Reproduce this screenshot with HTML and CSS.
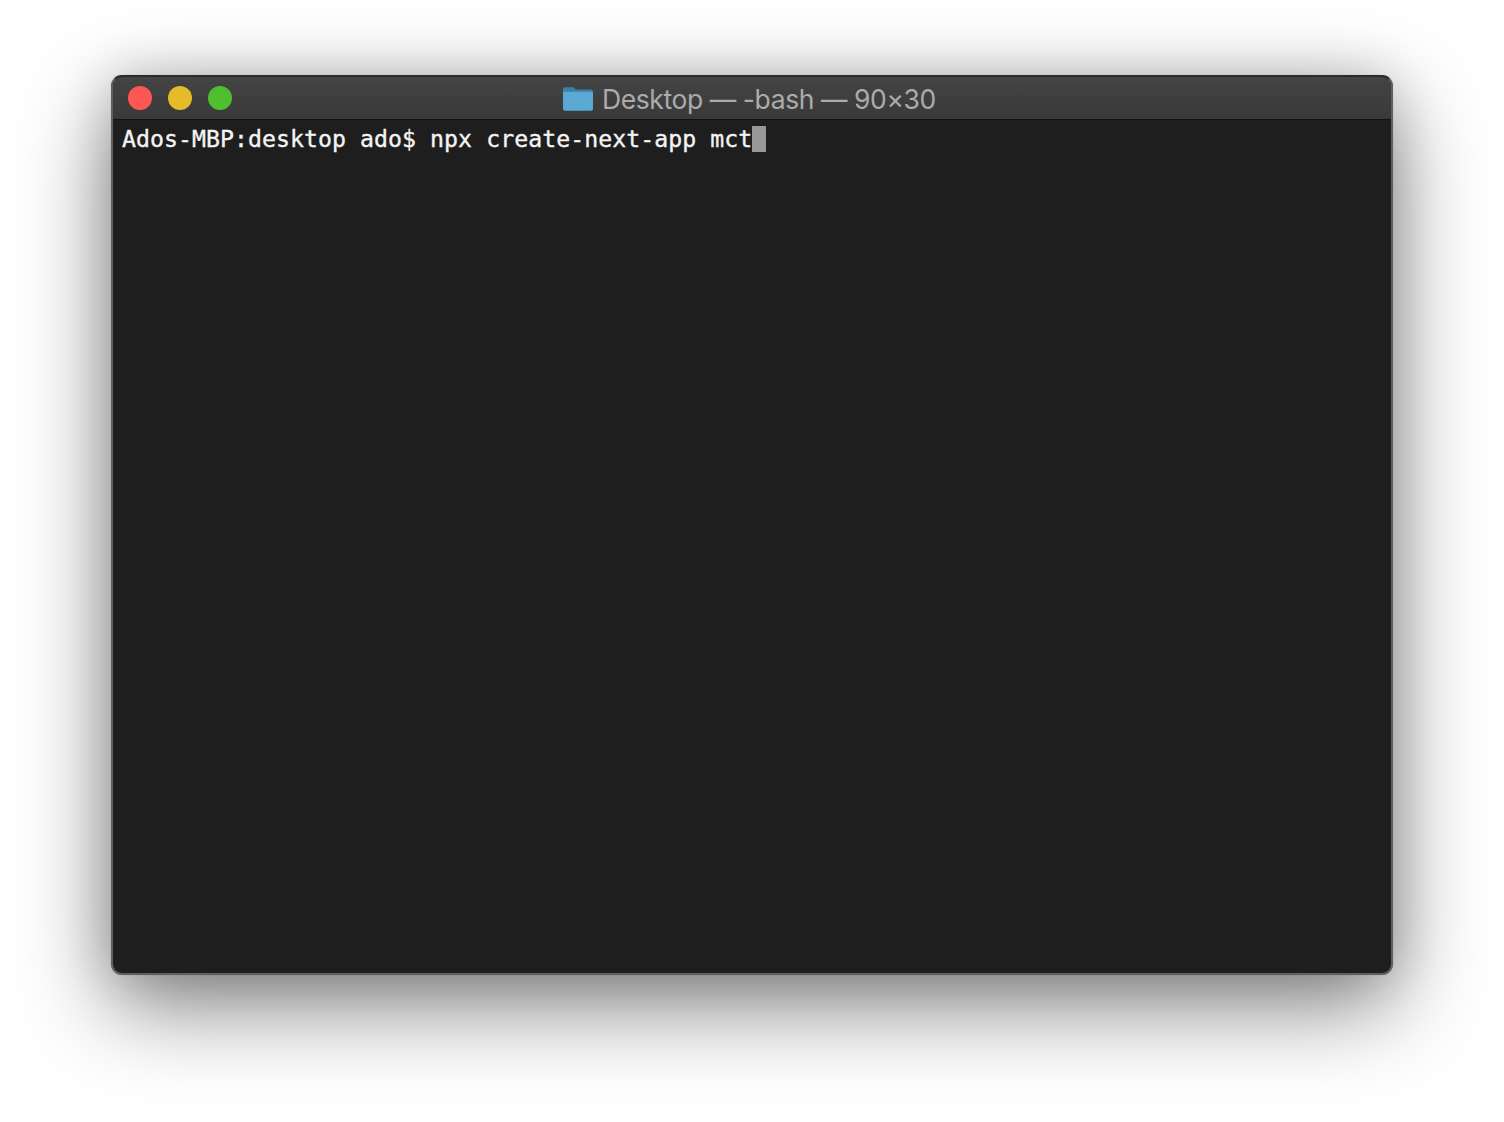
FILE: index.html
```
<!DOCTYPE html>
<html lang="en">
<head>
<meta charset="utf-8">
<title>Terminal</title>
<link rel="stylesheet" href="styles.css">
</head>
<body>
<main class="window">
  <header class="titlebar">
    <div class="lights">
      <span class="light red"></span>
      <span class="light yellow"></span>
      <span class="light green"></span>
    </div>
    <div class="title">
      <svg class="folder" width="32" height="26" viewBox="0 0 32 26" aria-hidden="true">
        <path d="M1 3.5C1 2.1 1.9 1.2 3.2 1.2H10.5C11.6 1.2 12 1.7 12.7 2.5L13.6 3.6H28.8C30.1 3.6 31 4.5 31 5.8V8H1Z" fill="#3f7fa6"/>
        <path d="M1 5.8H29C30.2 5.8 31 6.6 31 7.8V22.6C31 23.9 30.2 24.7 29 24.7H3C1.8 24.7 1 23.9 1 22.6Z" fill="#5aa9d4"/>
      </svg>
      <span class="title-text">Desktop — -bash — 90×30</span>
    </div>
  </header>
  <section class="screen">
    <span class="prompt">Ados-MBP:desktop ado$ npx create-next-app mct</span><span class="cursor"></span>
  </section>
</main>
</body>
</html>
```
FILE: styles.css
```
html, body {
  margin: 0;
  height: 100%;
  background: #fff;
}
body {
  width: 1504px;
  height: 1122px;
  overflow: hidden;
  box-sizing: border-box;
  padding: 75px 111px 147px;
}
.window {
  height: 900px;
  box-sizing: border-box;
  display: flex;
  flex-direction: column;
  border-radius: 11px;
  background: #1e1e1e;
  border: 2px solid #5f5f5f;
  border-top: 2px solid #2b2b2b;
  box-shadow: 0 0 1px 0 rgba(0,0,0,.3), 0 30px 90px rgba(0,0,0,.5), 0 0 50px rgba(0,0,0,.14);
  overflow: hidden;
}
.titlebar {
  flex: none;
  height: 43px;
  box-sizing: border-box;
  display: flex;
  align-items: center;
  position: relative;
  padding-left: 15px;
  background: linear-gradient(#444, #393939);
  border-bottom: 1px solid #111;
}
.lights {
  display: flex;
  gap: 16px;
}
.light {
  width: 24px;
  height: 24px;
  border-radius: 50%;
}
.red { background: #fc5753; }
.yellow { background: #e4bb29; }
.green { background: #50bf2f; }
.title {
  position: absolute;
  left: 449px;
  top: 0;
  height: 43px;
  display: flex;
  align-items: center;
  gap: 8px;
  color: #ababab;
  font: 26.5px "Inter", "Liberation Sans", sans-serif;
  letter-spacing: -.42px;
  white-space: nowrap;
}
.folder { flex: none; }
.screen {
  flex: 1;
  display: flex;
  align-items: flex-start;
  padding: 6px 0 0 9px;
  color: #f4f4f4;
  font: 23.2px/26px "DejaVu Sans Mono", "Liberation Mono", monospace;
  letter-spacing: .045px;
  -webkit-text-stroke: .35px #f4f4f4;
  white-space: pre;
}
.cursor {
  width: 14px;
  height: 26px;
  background: #989898;
}
```
